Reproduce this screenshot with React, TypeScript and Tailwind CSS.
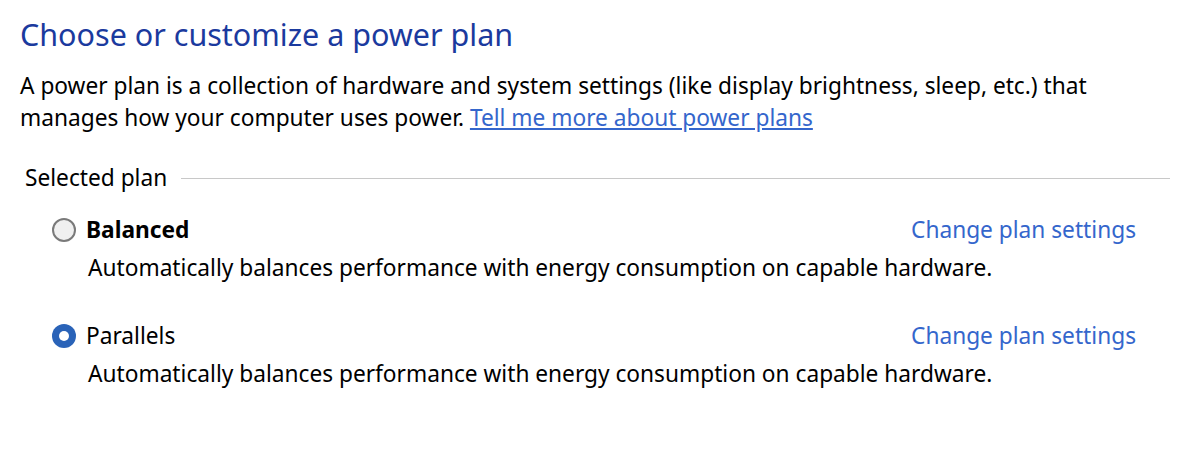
const font = { fontFamily: '"Segoe UI", "Noto Sans", sans-serif' };

type Plan = { name: string; desc: string; selected: boolean };

const plans: Plan[] = [
  { name: 'Balanced', desc: 'Automatically balances performance with energy consumption on capable hardware.', selected: false },
  { name: 'Parallels', desc: 'Automatically balances performance with energy consumption on capable hardware.', selected: true },
];

function Radio({ checked }: { checked: boolean }) {
  if (checked) {
    return (
      <span className="flex h-[24px] w-[24px] shrink-0 items-center justify-center rounded-full bg-[#2a63b8]">
        <span className="h-[10px] w-[10px] rounded-full bg-white" />
      </span>
    );
  }
  return <span className="h-[24px] w-[24px] shrink-0 rounded-full border-2 border-[#7a7a7a] bg-[#f0f0f0]" />;
}

function PlanRow({ plan }: { plan: Plan }) {
  return (
    <div>
      <div className="flex items-center">
        <Radio checked={plan.selected} />
        <span className={`ml-[10px] text-[22.7px] leading-[30px] ${plan.selected ? 'font-normal' : 'font-bold'}`}>{plan.name}</span>
        <a href="#" className="ml-auto text-[22.7px] leading-[30px] text-[#3466cc]">
          Change plan settings
        </a>
      </div>
      <p className="mt-[8px] pl-[36px] text-[22.7px] leading-[30px]">{plan.desc}</p>
    </div>
  );
}

export default function App() {
  return (
    <div className="h-[470px] w-[1194px] bg-white text-black" style={font}>
      <div className="pl-[20px] pr-[24px] pt-[14px]">
        <h1 className="text-[30.5px] leading-[40px] font-normal text-[#1b3a9e]">Choose or customize a power plan</h1>
        <p className="mt-[16px] max-w-[1110px] text-[22.7px] leading-[32px]">
          A power plan is a collection of hardware and system settings (like display brightness, sleep, etc.) that manages how
          your computer uses power.{' '}
          <a href="#" className="text-[#3466cc] underline">
            Tell me more about power plans
          </a>
        </p>

        <div className="mt-[29px] flex items-center pl-[5px]">
          <span className="text-[22.7px] leading-[30px]">Selected plan</span>
          <span className="ml-[14px] h-px flex-1 bg-[#c8c8c8]" />
        </div>

        <div className="mt-[22px] space-y-[38px] pl-[32px] pr-[34px]">
          {plans.map((p) => (
            <PlanRow key={p.name} plan={p} />
          ))}
        </div>
      </div>
    </div>
  );
}
